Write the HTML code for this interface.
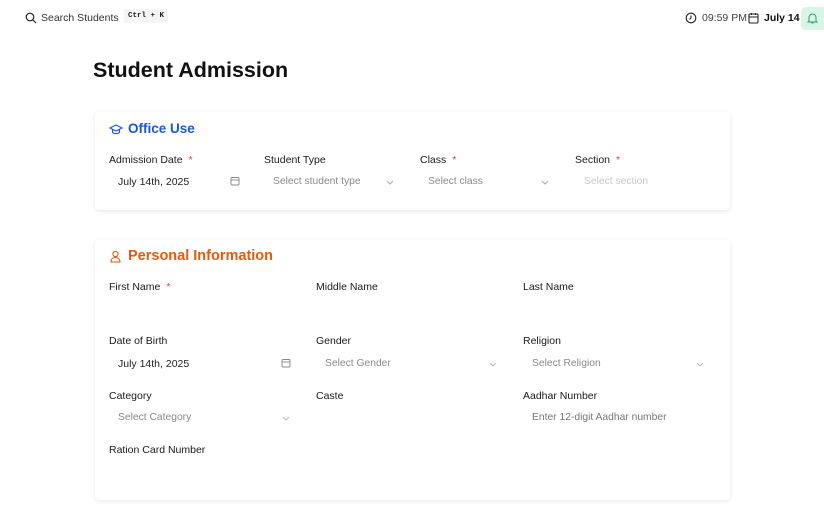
<!DOCTYPE html>
<html><head><meta charset="utf-8"><style>
*{box-sizing:border-box;margin:0;padding:0}
body{width:824px;height:512px;overflow:hidden;background:#fff;font-family:"Liberation Sans",sans-serif;color:#111;position:relative}
.abs{position:absolute}
.lbl{position:absolute;font-size:10.5px;color:#1a1a1a}
.lbl .r{color:#e53935;margin-left:6px}
.ph{position:absolute;font-size:10.3px;color:#8a8a8a}
.val{position:absolute;font-size:10.5px;color:#222}
.card{position:absolute;left:95px;width:635px;background:#fff;border-radius:4px;box-shadow:0 1px 4px rgba(0,0,0,0.10)}
.chev{position:absolute;width:8px;height:8px}
</style></head><body>
<svg class="abs" style="left:25px;top:12px" width="12" height="12" viewBox="0 0 12 12"><circle cx="5" cy="5" r="3.8" fill="none" stroke="#222" stroke-width="1.2"/><path d="M8 8l3 3" stroke="#222" stroke-width="1.2"/></svg>
<div class="abs" style="left:41px;top:12px;font-size:10.5px;color:#333">Search Students</div>
<div class="abs" style="left:124px;top:9px;padding:3px 4px;background:#f5f5f5;font-family:'Liberation Mono',monospace;font-size:7.5px;font-weight:bold;color:#222">Ctrl + K</div>
<svg class="abs" style="left:685px;top:12px" width="12" height="12" viewBox="0 0 12 12"><circle cx="6" cy="6" r="4.8" fill="none" stroke="#222" stroke-width="1.1"/><path d="M6 3.5V6L4.5 7.5" fill="none" stroke="#222" stroke-width="1.1"/></svg>
<div class="abs" style="left:702px;top:12px;font-size:10.5px;color:#444">09:59 PM</div>
<svg class="abs" style="left:748px;top:12px" width="11" height="12" viewBox="0 0 11 12"><rect x="1" y="2" width="9" height="9" rx="1" fill="none" stroke="#222" stroke-width="1.1"/><path d="M1 5h9M3.5 1v2M7.5 1v2" stroke="#222" stroke-width="1.1"/></svg>
<div class="abs" style="left:764px;top:12px;font-size:10.5px;font-weight:bold;color:#111">July 14</div>
<div class="abs" style="left:801px;top:7px;width:23px;height:23px;background:#d8f5e8;border-radius:5px 0 0 5px"></div>
<svg class="abs" style="left:807px;top:12px" width="11" height="12" viewBox="0 0 11 12"><path d="M2 9V5.5a3.5 3.5 0 0 1 7 0V9l1 1H1z M4.5 11h2" fill="none" stroke="#2e9e6a" stroke-width="1"/></svg>
<div class="abs" style="left:93px;top:58px;font-size:21.5px;font-weight:bold;color:#111">Student Admission</div>

<div class="card" style="top:112px;height:98px"></div>
<svg class="abs" style="left:109px;top:124px" width="14" height="11" viewBox="0 0 14 11"><path d="M1 4L7 1l6 3-6 3z M3.5 5.5v3c1.5 1.5 5.5 1.5 7 0v-3" fill="none" stroke="#1a56db" stroke-width="1.1"/></svg>
<div class="abs" style="left:128px;top:121px;font-size:13.5px;font-weight:bold;color:#1a56db">Office Use</div>
<div class="lbl" style="left:109px;top:154px">Admission Date<span class="r">*</span></div>
<div class="lbl" style="left:264px;top:154px">Student Type</div>
<div class="lbl" style="left:420px;top:154px">Class<span class="r">*</span></div>
<div class="lbl" style="left:575px;top:154px">Section<span class="r">*</span></div>
<div class="val" style="left:118px;top:176px">July 14th, 2025</div>
<svg class="abs" style="left:230px;top:176px" width="10" height="10" viewBox="0 0 10 10"><rect x="1" y="1.5" width="8" height="7.5" rx="1" fill="none" stroke="#888" stroke-width=".9"/><path d="M1 4h8" stroke="#888" stroke-width=".9"/></svg>
<div class="ph" style="left:273px;top:176px">Select student type</div>
<svg class="chev" style="left:386px;top:178px" viewBox="0 0 8 8"><path d="M1 3l3 3 3-3" fill="none" stroke="#aaa"/></svg>
<div class="ph" style="left:428px;top:176px">Select class</div>
<svg class="chev" style="left:541px;top:178px" viewBox="0 0 8 8"><path d="M1 3l3 3 3-3" fill="none" stroke="#aaa"/></svg>
<div class="ph" style="left:584px;top:176px;color:#c8c8c8">Select section</div>

<div class="card" style="top:240px;height:260px"></div>
<svg class="abs" style="left:110px;top:250px" width="11" height="13" viewBox="0 0 11 13"><circle cx="5.5" cy="4" r="2.6" fill="none" stroke="#e8590c" stroke-width="1.1"/><path d="M1 12c0-3 2-4.5 4.5-4.5S10 9 10 12z" fill="none" stroke="#e8590c" stroke-width="1.1"/></svg>
<div class="abs" style="left:128px;top:248px;font-size:14.5px;font-weight:bold;color:#e8590c">Personal Information</div>
<div class="lbl" style="left:109px;top:281px">First Name<span class="r">*</span></div>
<div class="lbl" style="left:316px;top:281px">Middle Name</div>
<div class="lbl" style="left:523px;top:281px">Last Name</div>
<div class="lbl" style="left:109px;top:335px">Date of Birth</div>
<div class="lbl" style="left:316px;top:335px">Gender</div>
<div class="lbl" style="left:523px;top:335px">Religion</div>
<div class="val" style="left:118px;top:358px">July 14th, 2025</div>
<svg class="abs" style="left:281px;top:358px" width="10" height="10" viewBox="0 0 10 10"><rect x="1" y="1.5" width="8" height="7.5" rx="1" fill="none" stroke="#888" stroke-width=".9"/><path d="M1 4h8" stroke="#888" stroke-width=".9"/></svg>
<div class="ph" style="left:325px;top:358px">Select Gender</div>
<svg class="chev" style="left:489px;top:360px" viewBox="0 0 8 8"><path d="M1 3l3 3 3-3" fill="none" stroke="#bbb"/></svg>
<div class="ph" style="left:532px;top:358px">Select Religion</div>
<svg class="chev" style="left:696px;top:360px" viewBox="0 0 8 8"><path d="M1 3l3 3 3-3" fill="none" stroke="#bbb"/></svg>
<div class="lbl" style="left:109px;top:390px">Category</div>
<div class="lbl" style="left:316px;top:390px">Caste</div>
<div class="lbl" style="left:523px;top:390px">Aadhar Number</div>
<div class="ph" style="left:118px;top:412px">Select Category</div>
<svg class="chev" style="left:282px;top:414px" viewBox="0 0 8 8"><path d="M1 3l3 3 3-3" fill="none" stroke="#bbb"/></svg>
<div class="ph" style="left:532px;top:412px;color:#777">Enter 12-digit Aadhar number</div>
<div class="lbl" style="left:109px;top:444px">Ration Card Number</div>
</body></html>
